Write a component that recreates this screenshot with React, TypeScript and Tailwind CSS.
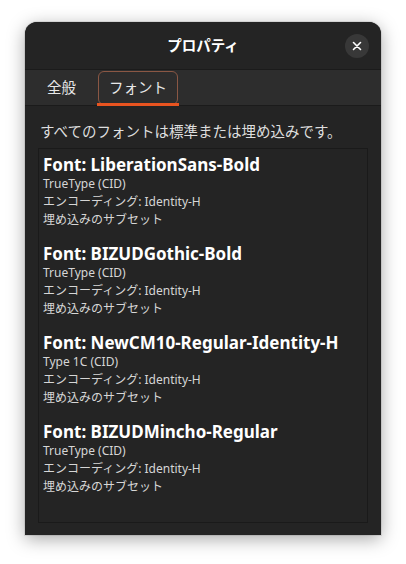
const fonts = [
  { name: "LiberationSans-Bold", type: "TrueType (CID)" },
  { name: "BIZUDGothic-Bold", type: "TrueType (CID)" },
  { name: "NewCM10-Regular-Identity-H", type: "Type 1C (CID)" },
  { name: "BIZUDMincho-Regular", type: "TrueType (CID)" },
];

export default function App() {
  return (
    <div
      className="w-full h-[564px] bg-white pt-[22px] pl-[25px]"
      style={{ fontFamily: '"Noto Sans", "Noto Sans CJK JP", sans-serif' }}
    >
      <div className="w-[356px] h-[513px] rounded-t-[12px] bg-[#242424] flex flex-col overflow-hidden shadow-[0_4px_18px_rgba(0,0,0,0.35),0_0_0_1px_rgba(0,0,0,0.08)]">
        {/* header */}
        <div className="h-[48px] shrink-0 grid grid-cols-[1fr_auto_1fr] items-center border-b border-[#1b1b1b] bg-[#242424]">
          <div />
          <div className="text-[14.5px] font-bold text-white">プロパティ</div>
          <div className="flex justify-end pr-[12px]">
            <button className="w-[24px] h-[24px] rounded-full bg-[#383838] flex items-center justify-center">
              <svg width="10" height="10" viewBox="0 0 10 10" fill="none" stroke="white" strokeWidth="1.6" strokeLinecap="round">
                <path d="M1.5 1.5l7 7M8.5 1.5l-7 7" />
              </svg>
            </button>
          </div>
        </div>

        {/* tabs */}
        <div className="h-[36px] shrink-0 flex items-start gap-[11px] pl-[11px] pt-[1px] bg-[#2d2d2d] border-b border-[#1b1b1b]">
          <div className="h-[34px] px-[11px] flex items-center text-[14.5px] text-[#e8e8e8]">全般</div>
          <div className="relative h-[34px] px-[10px] flex items-center text-[14.5px] text-[#e8e8e8] border border-[#8a5744] rounded-[6px]">
            フォント
            <div className="absolute -left-[2px] -right-[2px] -bottom-[2px] h-[3px] bg-[#e95420]" />
          </div>
        </div>

        {/* content */}
        <div className="flex-1 flex flex-col px-[13px] pt-[15px] pb-[12px] bg-[#242424]">
          <div className="pl-[2px] text-[14.5px] leading-[20px] text-[#dedede]">
            すべてのフォントは標準または埋め込みです。
          </div>
          <div className="mt-[7px] flex-1 border border-[#1a1a1a] bg-[#242424] pl-[4px] pt-[6px] flex flex-col gap-[15px]">
            {fonts.map((f) => (
              <div key={f.name} className="flex flex-col">
                <div className="text-[17px] leading-[20px] font-bold text-white">Font: {f.name}</div>
                <div className="text-[12px] leading-[18px] text-[#d6d6d6]">{f.type}</div>
                <div className="text-[12px] leading-[18px] text-[#d6d6d6]">エンコーディング: Identity-H</div>
                <div className="text-[12px] leading-[18px] text-[#d6d6d6]">埋め込みのサブセット</div>
              </div>
            ))}
          </div>
        </div>
      </div>
    </div>
  );
}
